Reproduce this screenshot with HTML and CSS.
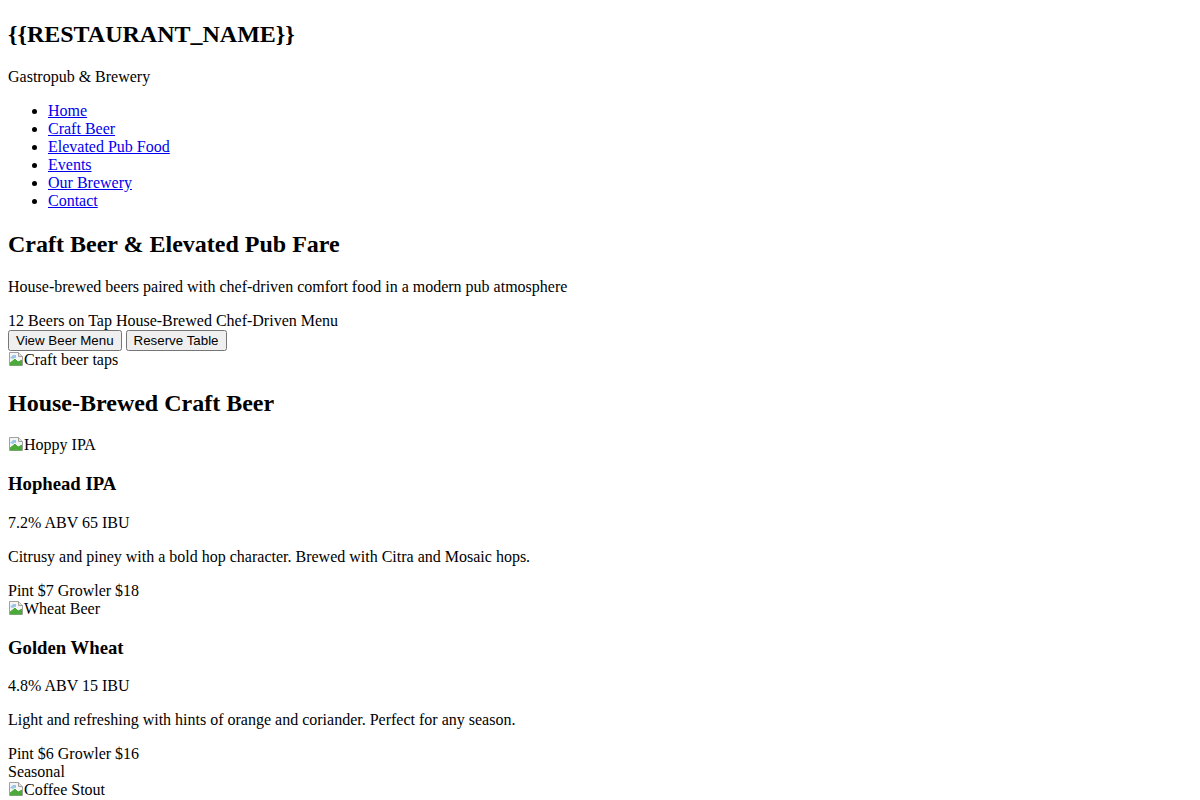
FILE: index.html
```html
<!DOCTYPE html>
<html lang="en">
<head>
<meta charset="utf-8">
<title>{{RESTAURANT_NAME}}</title>
<link rel="stylesheet" href="styles.css">
</head>
<body class="page">
<header>
  <h1 class="brand">{{RESTAURANT_NAME}}</h1>
  <p>Gastropub &amp; Brewery</p>
  <nav>
    <ul>
      <li><a href="#">Home</a></li>
      <li><a href="#">Craft Beer</a></li>
      <li><a href="#">Elevated Pub Food</a></li>
      <li><a href="#">Events</a></li>
      <li><a href="#">Our Brewery</a></li>
      <li><a href="#">Contact</a></li>
    </ul>
  </nav>
</header>
<section>
  <h2>Craft Beer &amp; Elevated Pub Fare</h2>
  <p>House-brewed beers paired with chef-driven comfort food in a modern pub atmosphere</p>
  <div><span>12 Beers on Tap</span> <span>House-Brewed</span> <span>Chef-Driven Menu</span></div>
  <div><button class="btn">View Beer Menu</button> <button class="btn">Reserve Table</button></div>
  <div><span class="broken"><svg class="broken-icon" width="16" height="16" viewBox="0 0 16 16"><path d="M1.5 1.5h9l4 4v9h-13z" fill="#f4f4f4" stroke="#a0a0a0"/><path d="M10.5 1.5v4h4" fill="#e0e0e0" stroke="#a0a0a0"/><path d="M2 7l3-3h3v5z" fill="#9cc6e8"/><path d="M2 14.5V11l5-4 3 3 4-2v6.5z" fill="#4caa3a"/><path d="M2 11l5-4 3 3 4-2" fill="none" stroke="#fff" stroke-width="1"/></svg>Craft beer taps</span></div>
</section>
<section>
  <h2>House-Brewed Craft Beer</h2>
  <div>
    <div><span class="broken"><svg class="broken-icon" width="16" height="16" viewBox="0 0 16 16"><path d="M1.5 1.5h9l4 4v9h-13z" fill="#f4f4f4" stroke="#a0a0a0"/><path d="M10.5 1.5v4h4" fill="#e0e0e0" stroke="#a0a0a0"/><path d="M2 7l3-3h3v5z" fill="#9cc6e8"/><path d="M2 14.5V11l5-4 3 3 4-2v6.5z" fill="#4caa3a"/><path d="M2 11l5-4 3 3 4-2" fill="none" stroke="#fff" stroke-width="1"/></svg>Hoppy IPA</span></div>
    <h3>Hophead IPA</h3>
    <p><span>7.2% ABV</span> <span>65 IBU</span></p>
    <p>Citrusy and piney with a bold hop character. Brewed with Citra and Mosaic hops.</p>
    <div><span>Pint $7</span> <span>Growler $18</span></div>
  </div>
  <div>
    <div><span class="broken"><svg class="broken-icon" width="16" height="16" viewBox="0 0 16 16"><path d="M1.5 1.5h9l4 4v9h-13z" fill="#f4f4f4" stroke="#a0a0a0"/><path d="M10.5 1.5v4h4" fill="#e0e0e0" stroke="#a0a0a0"/><path d="M2 7l3-3h3v5z" fill="#9cc6e8"/><path d="M2 14.5V11l5-4 3 3 4-2v6.5z" fill="#4caa3a"/><path d="M2 11l5-4 3 3 4-2" fill="none" stroke="#fff" stroke-width="1"/></svg>Wheat Beer</span></div>
    <h3>Golden Wheat</h3>
    <p><span>4.8% ABV</span> <span>15 IBU</span></p>
    <p>Light and refreshing with hints of orange and coriander. Perfect for any season.</p>
    <div><span>Pint $6</span> <span>Growler $16</span></div>
  </div>
  <div>
    <div>Seasonal</div>
    <div><span class="broken"><svg class="broken-icon" width="16" height="16" viewBox="0 0 16 16"><path d="M1.5 1.5h9l4 4v9h-13z" fill="#f4f4f4" stroke="#a0a0a0"/><path d="M10.5 1.5v4h4" fill="#e0e0e0" stroke="#a0a0a0"/><path d="M2 7l3-3h3v5z" fill="#9cc6e8"/><path d="M2 14.5V11l5-4 3 3 4-2v6.5z" fill="#4caa3a"/><path d="M2 11l5-4 3 3 4-2" fill="none" stroke="#fff" stroke-width="1"/></svg>Coffee Stout</span></div>
    <h3>Midnight Coffee Stout</h3>
    <p><span>6.5% ABV</span> <span>35 IBU</span></p>
  </div>
</section>
</body>
</html>
```

FILE: styles.css
```css
.page {
  font-family: "Liberation Serif", "Times New Roman", serif;
  font-size: 16px;
  line-height: 18px;
  color: #000;
  background: #fff;
  margin: 0 8px 8px;
}

.brand {
  font-size: 1.5em;
  line-height: 28px;
  margin: 0.83em 0;
}

.page h2 {
  line-height: 28px;
}

.page h3 {
  line-height: 22px;
}

.btn {
  font-family: "Liberation Sans", Arial, sans-serif;
  font-size: 13.33px;
  line-height: normal;
}

.broken {
  display: inline;
}

.broken-icon {
  vertical-align: -2px;
}
```
